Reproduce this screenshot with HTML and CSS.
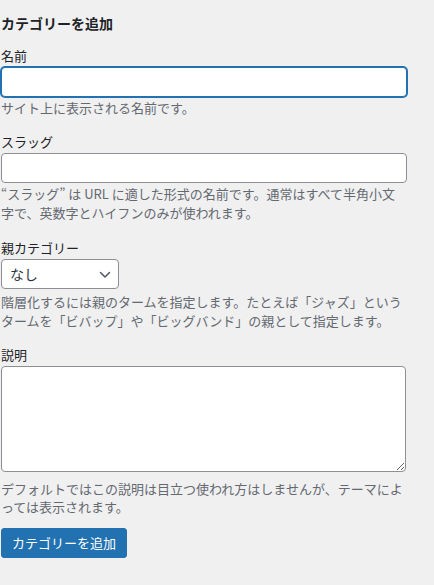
FILE: index.html
```html
<!DOCTYPE html>
<html lang="ja">
<head>
<meta charset="utf-8">
<title>カテゴリーを追加</title>
<link rel="stylesheet" href="styles.css">
</head>
<body>
<div class="form-wrap">
  <h2 class="title">カテゴリーを追加</h2>
  <form class="term-form">
    <div class="field field-name">
      <label class="label" for="tag-name">名前</label>
      <input class="text-input is-focused" id="tag-name" type="text">
      <p class="desc">サイト上に表示される名前です。</p>
    </div>
    <div class="field field-slug">
      <label class="label" for="tag-slug">スラッグ</label>
      <input class="text-input" id="tag-slug" type="text">
      <p class="desc">“スラッグ” は URL に適した形式の名前です。通常はすべて半角小文字で、英数字とハイフンのみが使われます。</p>
    </div>
    <div class="field field-parent">
      <label class="label" for="parent">親カテゴリー</label>
      <div class="select-wrap">
        <select class="select" id="parent"><option>なし</option></select>
        <svg class="chevron" width="12" height="8" viewBox="0 0 12 8" aria-hidden="true"><path d="M1.5 1.5 L6 6 L10.5 1.5" fill="none" stroke="#50575e" stroke-width="1.5" stroke-linecap="round" stroke-linejoin="round"/></svg>
      </div>
      <p class="desc desc-after-select">階層化するには親のタームを指定します。たとえば「ジャズ」というタームを「ビバップ」や「ビッグバンド」の親として指定します。</p>
    </div>
    <div class="field field-desc">
      <label class="label" for="tag-description">説明</label>
      <textarea class="textarea" id="tag-description"></textarea>
      <p class="desc">デフォルトではこの説明は目立つ使われ方はしませんが、テーマによっては表示されます。</p>
    </div>
    <div class="submit">
      <button class="button-primary" type="button">カテゴリーを追加</button>
    </div>
  </form>
</div>
</body>
</html>
```

FILE: styles.css
```css
html, body {
  margin: 0;
  padding: 0;
  background: #f0f0f1;
}

body {
  font-family: "Noto Sans CJK JP", "Noto Sans", "Liberation Sans", sans-serif;
  font-size: 13px;
  color: #1d2327;
}

.form-wrap {
  width: 406px;
  padding-left: 1px;
}

.title {
  margin: 13px 0 0;
  font-size: 14px;
  line-height: 20px;
  font-weight: 700;
  color: #1d2327;
}

.field {
  margin-top: 16px;
}

.field-name {
  margin-top: 14px;
}

.field-parent {
  margin-top: 17px;
}

.label {
  display: block;
  line-height: 18px;
  padding-bottom: 2px;
  color: #1d2327;
}

.text-input {
  display: block;
  box-sizing: border-box;
  width: 406px;
  height: 30px;
  margin: 0;
  padding: 0 8px;
  border: 1px solid #8c8f94;
  border-radius: 4px;
  background: #fff;
  font: inherit;
  outline: none;
}

.text-input.is-focused {
  border-color: #2271b1;
  box-shadow: 0 0 0 1px #2271b1;
}

.desc {
  margin: 2px 0 0;
  line-height: 18.4px;
  color: #646970;
}

.select-wrap {
  position: relative;
  width: 118px;
  height: 30px;
}

.select {
  display: block;
  box-sizing: border-box;
  width: 118px;
  height: 30px;
  margin: 0;
  padding: 0 24px 0 8px;
  border: 1px solid #8c8f94;
  border-radius: 4px;
  background: #fff;
  color: #2c3338;
  font: inherit;
  font-size: 14px;
  -webkit-appearance: none;
  appearance: none;
  outline: none;
}

.chevron {
  position: absolute;
  right: 8px;
  top: 12px;
  pointer-events: none;
}

.desc-after-select {
  margin-top: 4px;
}

.textarea {
  display: block;
  box-sizing: border-box;
  width: 405px;
  height: 106px;
  margin: 0 0 8px;
  padding: 2px 6px;
  border: 1px solid #8c8f94;
  border-radius: 4px;
  background: #fff;
  font: inherit;
  outline: none;
}

.submit {
  margin-top: 11px;
}

.button-primary {
  box-sizing: border-box;
  height: 30px;
  margin: 0;
  padding: 0 10px;
  border: 1px solid #2271b1;
  border-radius: 3px;
  background: #2271b1;
  color: #fff;
  font: inherit;
  font-size: 13px;
  line-height: 28px;
  cursor: pointer;
}
```
